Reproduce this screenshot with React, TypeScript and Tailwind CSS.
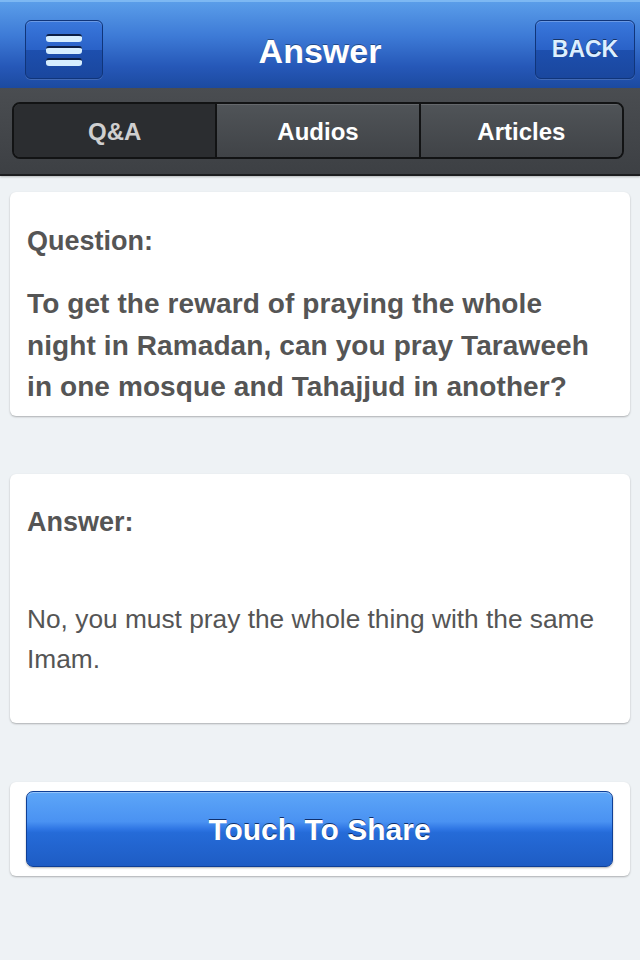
const font = { fontFamily: '"Liberation Sans", Arial, Helvetica, sans-serif' };

function NavButton({ children, className = "" }: { children: React.ReactNode; className?: string }) {
  return (
    <div
      className={`relative flex items-center justify-center overflow-hidden rounded-[6px] border border-[#10357a] bg-[linear-gradient(to_bottom,#3a78dc_0%,#2a62c8_50%,#1d4fae_51%,#1a479e_100%)] shadow-[inset_0_1px_0_rgba(255,255,255,0.25),0_1px_0_rgba(255,255,255,0.15)] ${className}`}
    >
      {children}
    </div>
  );
}

function MenuIcon() {
  return (
    <div className="flex flex-col gap-[4px]">
      {[0, 1, 2].map((i) => (
        <div
          key={i}
          className="h-[8px] w-[36px] rounded-[3px] border-t-[2px] border-[#0b1f47] bg-[#d6eeff]"
        />
      ))}
    </div>
  );
}

const tabs = ["Q&A", "Audios", "Articles"];

export default function App() {
  return (
    <div className="min-h-[960px] w-[640px] bg-[#eef2f5]" style={font}>
      {/* header */}
      <header className="relative flex h-[88px] items-start justify-between border-t-[2px] border-[#7db8f3] bg-[linear-gradient(to_bottom,#5a9de9_0%,#3d7ad6_40%,#2658b8_75%,#1c4aa0_100%)] px-[25px] pt-[18px]">
        <NavButton className="h-[59px] w-[78px]">
          <MenuIcon />
        </NavButton>
        <h1 className="absolute left-1/2 top-[49px] -translate-x-1/2 -translate-y-1/2 text-[34px] font-bold text-white [text-shadow:0_-1px_0_rgba(0,0,0,0.35)]">
          Answer
        </h1>
        <NavButton className="-mr-[20px] h-[59px] w-[100px]">
          <span className="text-[23px] font-bold text-[#dcefff] [text-shadow:0_-1px_0_rgba(0,0,0,0.5)]">
            BACK
          </span>
        </NavButton>
      </header>

      {/* segmented tabs */}
      <div className="h-[88px] border-b-[2px] border-[#1c1d1f] bg-[linear-gradient(to_bottom,#4a4d51,#3d4044)] pl-[12px] pr-[16px] pt-[14px] shadow-[0_1px_2px_rgba(0,0,0,0.25)]">
        <div className="flex h-[57px] overflow-hidden rounded-[8px] border-[2px] border-[#121314]">
          {tabs.map((t, i) => (
            <div
              key={t}
              className={`flex flex-1 items-center justify-center pt-[2px] text-[24px] font-bold ${
                i > 0 ? "border-l-[2px] border-[#121314]" : ""
              } ${
                i === 0
                  ? "bg-[#2b2d30] text-[#cfcfcf]"
                  : "bg-[linear-gradient(to_bottom,#505458,#404347)] text-white shadow-[inset_0_1px_0_rgba(255,255,255,0.12)]"
              }`}
            >
              {t}
            </div>
          ))}
        </div>
      </div>

      <main className="flex flex-col px-[10px] pt-[16px]">
        {/* question card */}
        <section className="h-[224px] rounded-[6px] bg-white px-[17px] pt-[28px] text-[#555555] shadow-[0_1px_2px_rgba(0,0,0,0.28)]">
          <h2 className="text-[27px] font-bold leading-[42px]">Question:</h2>
          <p className="mt-[21px] text-[28px] font-bold leading-[41.5px] tracking-[0.1px]">
            To get the reward of praying the whole night in Ramadan, can you pray Taraweeh in one
            mosque and Tahajjud in another?
          </p>
        </section>

        {/* answer card */}
        <section className="mt-[58px] h-[249px] rounded-[6px] bg-white px-[17px] pt-[27px] text-[#555555] shadow-[0_1px_2px_rgba(0,0,0,0.28)]">
          <h2 className="text-[27px] font-bold leading-[42px]">Answer:</h2>
          <p className="mt-[56px] text-[26.3px] leading-[40px]">
            No, you must pray the whole thing with the same Imam.
          </p>
        </section>

        {/* share */}
        <section className="mt-[59px] rounded-[6px] bg-white py-[9px] pl-[16px] pr-[17px] shadow-[0_1px_2px_rgba(0,0,0,0.28)]">
          <button className="flex h-[76px] w-full items-center justify-center rounded-[7px] border border-[#0f3f96] bg-[linear-gradient(to_bottom,#5da6f8_0%,#4a92f2_40%,#2f76e4_50%,#256bd8_55%,#1e5cc4_100%)] shadow-[inset_0_1px_0_rgba(255,255,255,0.35),0_1px_2px_rgba(0,0,0,0.3)]">
            <span className="text-[30px] font-bold text-white [text-shadow:0_-1px_0_rgba(0,20,70,0.8)]">
              Touch To Share
            </span>
          </button>
        </section>
      </main>
    </div>
  );
}
